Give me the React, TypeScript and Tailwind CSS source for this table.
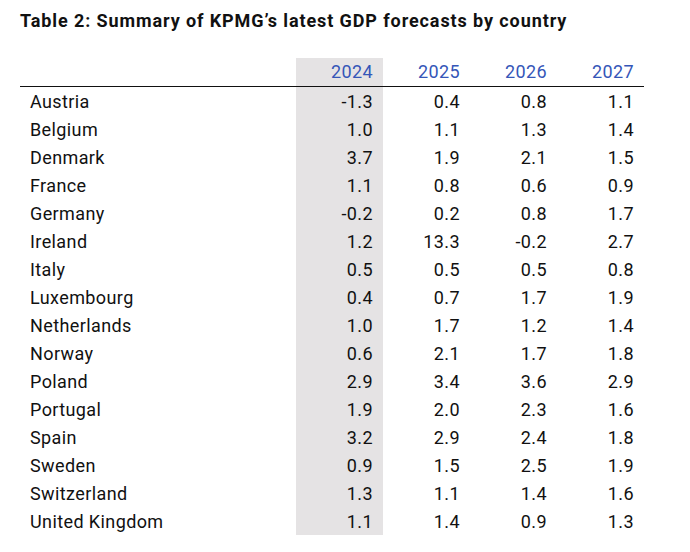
import React from 'react';

type Row = { country: string; values: string[] };

const years = ['2024', '2025', '2026', '2027'];

const rows: Row[] = [
  { country: 'Austria', values: ['-1.3', '0.4', '0.8', '1.1'] },
  { country: 'Belgium', values: ['1.0', '1.1', '1.3', '1.4'] },
  { country: 'Denmark', values: ['3.7', '1.9', '2.1', '1.5'] },
  { country: 'France', values: ['1.1', '0.8', '0.6', '0.9'] },
  { country: 'Germany', values: ['-0.2', '0.2', '0.8', '1.7'] },
  { country: 'Ireland', values: ['1.2', '13.3', '-0.2', '2.7'] },
  { country: 'Italy', values: ['0.5', '0.5', '0.5', '0.8'] },
  { country: 'Luxembourg', values: ['0.4', '0.7', '1.7', '1.9'] },
  { country: 'Netherlands', values: ['1.0', '1.7', '1.2', '1.4'] },
  { country: 'Norway', values: ['0.6', '2.1', '1.7', '1.8'] },
  { country: 'Poland', values: ['2.9', '3.4', '3.6', '2.9'] },
  { country: 'Portugal', values: ['1.9', '2.0', '2.3', '1.6'] },
  { country: 'Spain', values: ['3.2', '2.9', '2.4', '1.8'] },
  { country: 'Sweden', values: ['0.9', '1.5', '2.5', '1.9'] },
  { country: 'Switzerland', values: ['1.3', '1.1', '1.4', '1.6'] },
  { country: 'United Kingdom', values: ['1.1', '1.4', '0.9', '1.3'] },
];

export default function App() {
  return (
    <div className="w-[690px] h-[552px] bg-white pl-5 pt-[9px] font-['Roboto',sans-serif] text-[#111]">
      {/* Title */}
      <h1 className="text-[18px] font-bold leading-6 tracking-[0.9px]">
        Table 2: Summary of KPMG’s latest GDP forecasts by country
      </h1>

      {/* Table */}
      <table className="mt-[25px] border-collapse text-[18px] leading-[26px] tracking-[0.4px]">
        <thead>
          <tr className="border-b-[1.5px] border-[#111]">
            <th className="w-[276px] h-[28px] p-0" />
            {years.map((y, i) => (
              <th
                key={y}
                className={`w-[87px] h-[28px] p-0 pr-[10px] pt-[1px] text-right font-normal text-[#3556b8] ${i === 0 ? 'bg-[#e5e3e4]' : ''}`}
              >
                {y}
              </th>
            ))}
          </tr>
        </thead>
        <tbody>
          {rows.map(r => (
            <tr key={r.country}>
              <td className="h-[28px] p-0 pl-[10px] pt-[2px] text-left">{r.country}</td>
              {r.values.map((v, i) => (
                <td
                  key={i}
                  className={`h-[28px] p-0 pr-[10px] pt-[2px] text-right ${i === 0 ? 'bg-[#e5e3e4]' : ''}`}
                >
                  {v}
                </td>
              ))}
            </tr>
          ))}
        </tbody>
      </table>
    </div>
  );
}
